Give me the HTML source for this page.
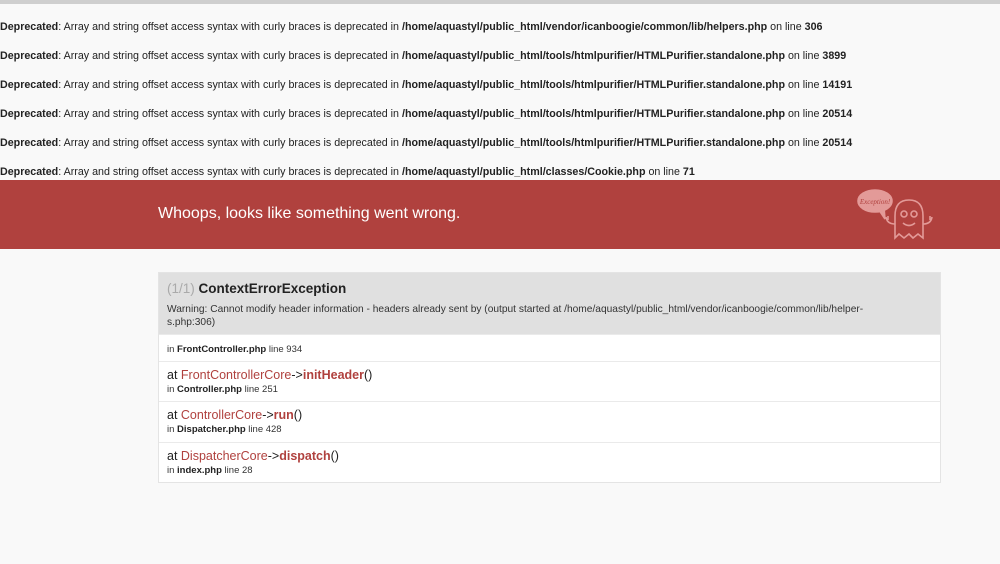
<!DOCTYPE html>
<html><head><meta charset="utf-8"><style>
*{margin:0;padding:0;box-sizing:border-box}
body{width:1000px;height:564px;overflow:hidden;background:#f9f9f9;font-family:"Liberation Sans",Arial,sans-serif;color:#222;position:relative}
.top{position:absolute;left:0;top:0;width:1000px;height:4px;background:#cfcfcf}
.dep{position:absolute;left:0;font-size:10.7px;white-space:nowrap;color:#222}
.band{position:absolute;left:0;top:180px;width:1000px;height:69px;background:#b0413e}
.band h1{position:absolute;left:158px;top:25px;font-size:16px;font-weight:normal;color:#fff}
.box{position:absolute;left:158px;top:272px;width:783px;border:1px solid #e4e4e4;background:#fff}
.hd{background:#e0e0e0;height:61px;padding:8px 8px 0 8px}
.hd .t{font-size:13.5px;color:#222;font-weight:bold}
.hd .t span{color:#aaa;font-weight:normal}
.hd .m{font-size:10.2px;margin-top:7px;line-height:13px;color:#333}
.row{border-top:1px solid #eaeaea;padding:0 8px;font-size:9.5px;color:#333}
.row b{color:#222}
.at{font-size:12.5px;color:#222}
.row .r{color:#b0413e}
</style></head><body>
<div class="top"></div>
<div class="dep" style="top:21px"><b>Deprecated</b>: Array and string offset access syntax with curly braces is deprecated in <b>/home/aquastyl/public_html/vendor/icanboogie/common/lib/helpers.php</b> on line <b>306</b></div>
<div class="dep" style="top:50px"><b>Deprecated</b>: Array and string offset access syntax with curly braces is deprecated in <b>/home/aquastyl/public_html/tools/htmlpurifier/HTMLPurifier.standalone.php</b> on line <b>3899</b></div>
<div class="dep" style="top:79px"><b>Deprecated</b>: Array and string offset access syntax with curly braces is deprecated in <b>/home/aquastyl/public_html/tools/htmlpurifier/HTMLPurifier.standalone.php</b> on line <b>14191</b></div>
<div class="dep" style="top:108px"><b>Deprecated</b>: Array and string offset access syntax with curly braces is deprecated in <b>/home/aquastyl/public_html/tools/htmlpurifier/HTMLPurifier.standalone.php</b> on line <b>20514</b></div>
<div class="dep" style="top:137px"><b>Deprecated</b>: Array and string offset access syntax with curly braces is deprecated in <b>/home/aquastyl/public_html/tools/htmlpurifier/HTMLPurifier.standalone.php</b> on line <b>20514</b></div>
<div class="dep" style="top:166px"><b>Deprecated</b>: Array and string offset access syntax with curly braces is deprecated in <b>/home/aquastyl/public_html/classes/Cookie.php</b> on line <b>71</b></div>
<div class="band"><h1>Whoops, looks like something went wrong.</h1>
<svg style="position:absolute;left:855px;top:6px" width="90" height="58" viewBox="0 0 90 58" fill="none" stroke="#e39a98" stroke-width="1.6">
<ellipse cx="20" cy="15" rx="17" ry="11" fill="#e39a98"/>
<path d="M24 24 L30 33 L29 22" fill="#e39a98"/>
<text x="20" y="18" font-size="7" font-style="italic" fill="#b0413e" stroke="none" text-anchor="middle" font-family="Liberation Serif,serif">Exception!</text>
<path d="M40 52 L40 30 Q40 14 54 14 Q68 14 68 30 L68 52 L63 48 L58 52 L54 48 L49 52 L44 48 Z"/>
<circle cx="49" cy="28" r="3"/><circle cx="59" cy="28" r="3"/>
<path d="M48 37 Q54 42 60 37"/>
<path d="M40 38 Q32 38 31 31 M33 30 L33 34 M68 38 Q76 38 77 31 M75 30 L75 34"/>
</svg></div>
<div class="box">
<div class="hd"><div class="t"><span>(1/1)</span> ContextErrorException</div>
<div class="m">Warning: Cannot modify header information - headers already sent by (output started at /home/aquastyl/public_html/vendor/icanboogie/common/lib/helper-<br>s.php:306)</div></div>
<div class="row" style="height:27px;padding-top:9px">in <b>FrontController.php</b> line 934</div>
<div class="row" style="height:40px;padding-top:6px"><div class="at">at <span class="r">FrontControllerCore</span>-&gt;<b class="r">initHeader</b>()</div><div style="margin-top:2px">in <b>Controller.php</b> line 251</div></div>
<div class="row" style="height:41px;padding-top:6px"><div class="at">at <span class="r">ControllerCore</span>-&gt;<b class="r">run</b>()</div><div style="margin-top:2px">in <b>Dispatcher.php</b> line 428</div></div>
<div class="row" style="height:40px;padding-top:6px"><div class="at">at <span class="r">DispatcherCore</span>-&gt;<b class="r">dispatch</b>()</div><div style="margin-top:2px">in <b>index.php</b> line 28</div></div>
</div>
</body></html>
